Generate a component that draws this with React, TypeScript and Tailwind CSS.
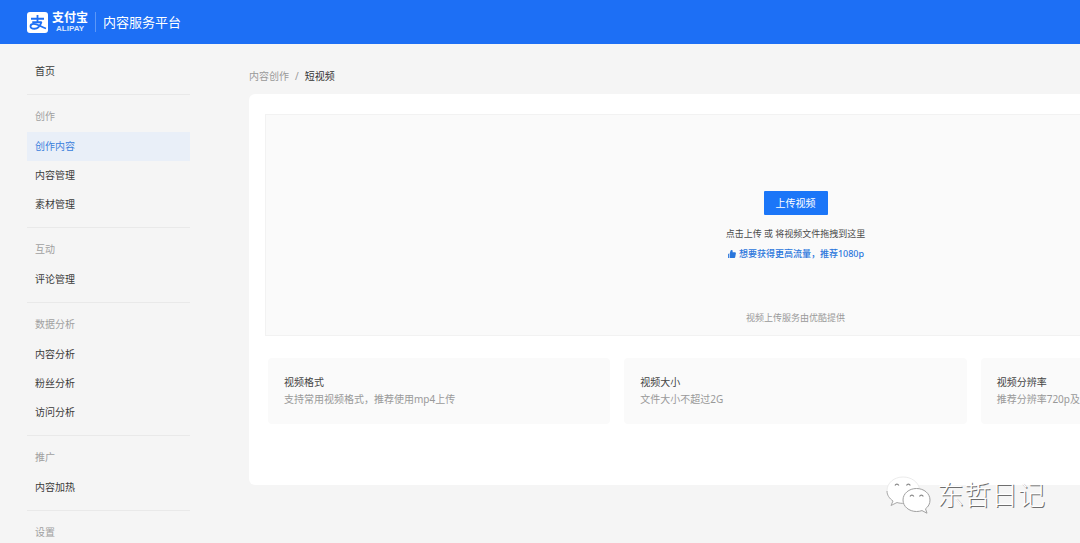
import { AiFillLike } from "react-icons/ai";

type NavGroup = {
  title: string;
  items: string[];
};

const groups: NavGroup[] = [
  { title: "创作", items: ["创作内容", "内容管理", "素材管理"] },
  { title: "互动", items: ["评论管理"] },
  { title: "数据分析", items: ["内容分析", "粉丝分析", "访问分析"] },
  { title: "推广", items: ["内容加热"] },
  { title: "设置", items: [] },
];

const tips = [
  { title: "视频格式", text: "支持常用视频格式，推荐使用mp4上传" },
  { title: "视频大小", text: "文件大小不超过2G" },
  { title: "视频分辨率", text: "推荐分辨率720p及以上" },
];

function AlipayLogo() {
  return (
    <svg viewBox="0 0 42 42" className="h-[21px] w-[21px]" aria-hidden="true">
      <rect width="42" height="42" rx="6" fill="#fff" />
      <g fill="none" stroke="#1d6ff5" strokeWidth="3.6">
        <path d="M8 13.500h26M21 6v14M10.500 20.500h19" />
        <path d="M29 20c-2 6-7 13.500-14 13.500-5 0-8-2-8-5 0-2.800 2.600-4.800 6.500-4.800 7 0 14 5.800 24.500 9.300" />
      </g>
    </svg>
  );
}

function Header() {
  return (
    <header className="flex h-11 shrink-0 items-center bg-[#1d6ff5] pl-[27px] text-white">
      <a href="#" className="flex items-center">
        <AlipayLogo />
        <span className="ml-1 flex flex-col items-center">
          <span className="text-[12px] leading-[14px] font-bold">支付宝</span>
          <span className="font-['Liberation_Sans',sans-serif] text-[8px] leading-[8px] font-bold text-[#d6e5ff]">ALIPAY</span>
        </span>
      </a>
      <span className="ml-[7px] h-5 w-px bg-[#5b97f8]" />
      <h1 className="ml-[7px] text-[13px] leading-5">内容服务平台</h1>
    </header>
  );
}

function NavItem({ label, active }: { label: string; active?: boolean }) {
  return (
    <a
      href="#"
      aria-current={active ? "page" : undefined}
      className={`flex h-[29px] items-center pl-2 ${active ? "bg-[#e9eff8] text-[#3a80dc]" : "text-[#3a3a3a]"}`}
    >
      {label}
    </a>
  );
}

function Sidebar() {
  return (
    <nav className="ml-[27px] w-[163px] shrink-0 pt-[13px] text-[10px]">
      <NavItem label="首页" />
      {groups.map((group) => (
        <section key={group.title} className="mt-2 border-t border-[#e9e9e9] pt-[6px]">
          <h2 className="flex h-[31px] items-center pl-2 text-[#a0a0a0]">{group.title}</h2>
          {group.items.map((item) => (
            <NavItem key={item} label={item} active={item === "创作内容"} />
          ))}
        </section>
      ))}
    </nav>
  );
}

function UploadArea() {
  return (
    <div className="flex h-[222px] flex-col items-center border border-[#f2f2f2] bg-[#fafafa] pt-[76px] text-[9px]">
      <button type="button" className="h-6 rounded-[1px] bg-[#1b76f8] px-3 text-[10px] text-white">
        上传视频
      </button>
      <p className="mt-[9px] leading-5 text-[#4a4a4a]">点击上传 或 将视频文件拖拽到这里</p>
      <p className="flex items-center gap-[2px] leading-5 font-medium text-[#2a76dc]">
        <AiFillLike className="h-[10px] w-[10px]" aria-hidden="true" />
        想要获得更高流量，推荐1080p
      </p>
      <p className="mt-11 leading-5 text-[#999999]">视频上传服务由优酷提供</p>
    </div>
  );
}

function WechatMark() {
  return (
    <div className="pointer-events-none absolute right-[35px] bottom-[28px] flex items-center gap-[6px]">
      <svg viewBox="0 0 46 40" className="h-10 w-[46px]" fill="#fff" aria-hidden="true">
        <path
          d="M18 2C9 2 2 8 2 15.500c0 4.500 2.300 8 6 10.500L6 30.500l6-3c2.500.8 5 1.200 8 1C20 20 26 13.500 34.500 13.500 33 7 26.500 2 18 2z"
          stroke="#e6e6e6"
          strokeWidth="0.8"
        />
        <path d="M2 16c0 4.300 2.500 7.500 6 10L6 30.500l6-3c2.500.8 5 1 7 .8" fill="none" stroke="#a5a5a5" strokeWidth="0.9" />
        <path
          d="M31.500 13.500C24 13.500 18 18.500 18 25s6 11.500 13.500 11.500c2 0 3.800-.3 5.500-.9l5 2.600-1.500-4.400c3-2.200 4.500-5.200 4.500-8.800 0-6.500-6-11.500-13.500-11.500z"
          stroke="#a0a0a0"
          strokeWidth="1"
        />
        <path
          d="M10 10.500c.8-1.800 3-1.800 3.800 0M21.500 10.500c.8-1.800 3-1.800 3.800 0M25 21.500c.8-1.800 3-1.800 3.800 0M34.500 21.500c.8-1.800 3-1.800 3.800 0"
          fill="none"
          stroke="#8a8a8a"
          strokeWidth="1.200"
        />
      </svg>
      <span className="text-[27px] leading-10 font-light text-white [text-shadow:1px_1px_0_#6e6e6e]">东哲日记</span>
    </div>
  );
}

export default function App() {
  return (
    <div className="relative flex h-screen flex-col overflow-hidden bg-[#f5f5f5] font-['Noto_Sans','Noto_Sans_CJK_SC',sans-serif]">
      <Header />
      <div className="flex min-h-0 flex-1 items-start overflow-auto [scrollbar-width:none]">
        <Sidebar />
        <main className="ml-[59px] min-w-[1093px] flex-1 pt-[22px] text-[10px]">
          <div className="flex gap-[6px] leading-5 text-[#999999]">
            <a href="#">内容创作</a>
            <span>/</span>
            <span className="text-[#333333]">短视频</span>
          </div>
          <div className="mt-2 rounded-md bg-white px-4 pt-5 pb-[61px]">
            <UploadArea />
            <div className="mx-[3px] mt-[22px] grid grid-cols-3 gap-[14px]">
              {tips.map((tip) => (
                <section key={tip.title} className="rounded-sm bg-[#fafafa] p-4 leading-[17px]">
                  <h3 className="text-[#444444]">{tip.title}</h3>
                  <p className="text-[#999999]">{tip.text}</p>
                </section>
              ))}
            </div>
          </div>
        </main>
      </div>
      <WechatMark />
    </div>
  );
}
